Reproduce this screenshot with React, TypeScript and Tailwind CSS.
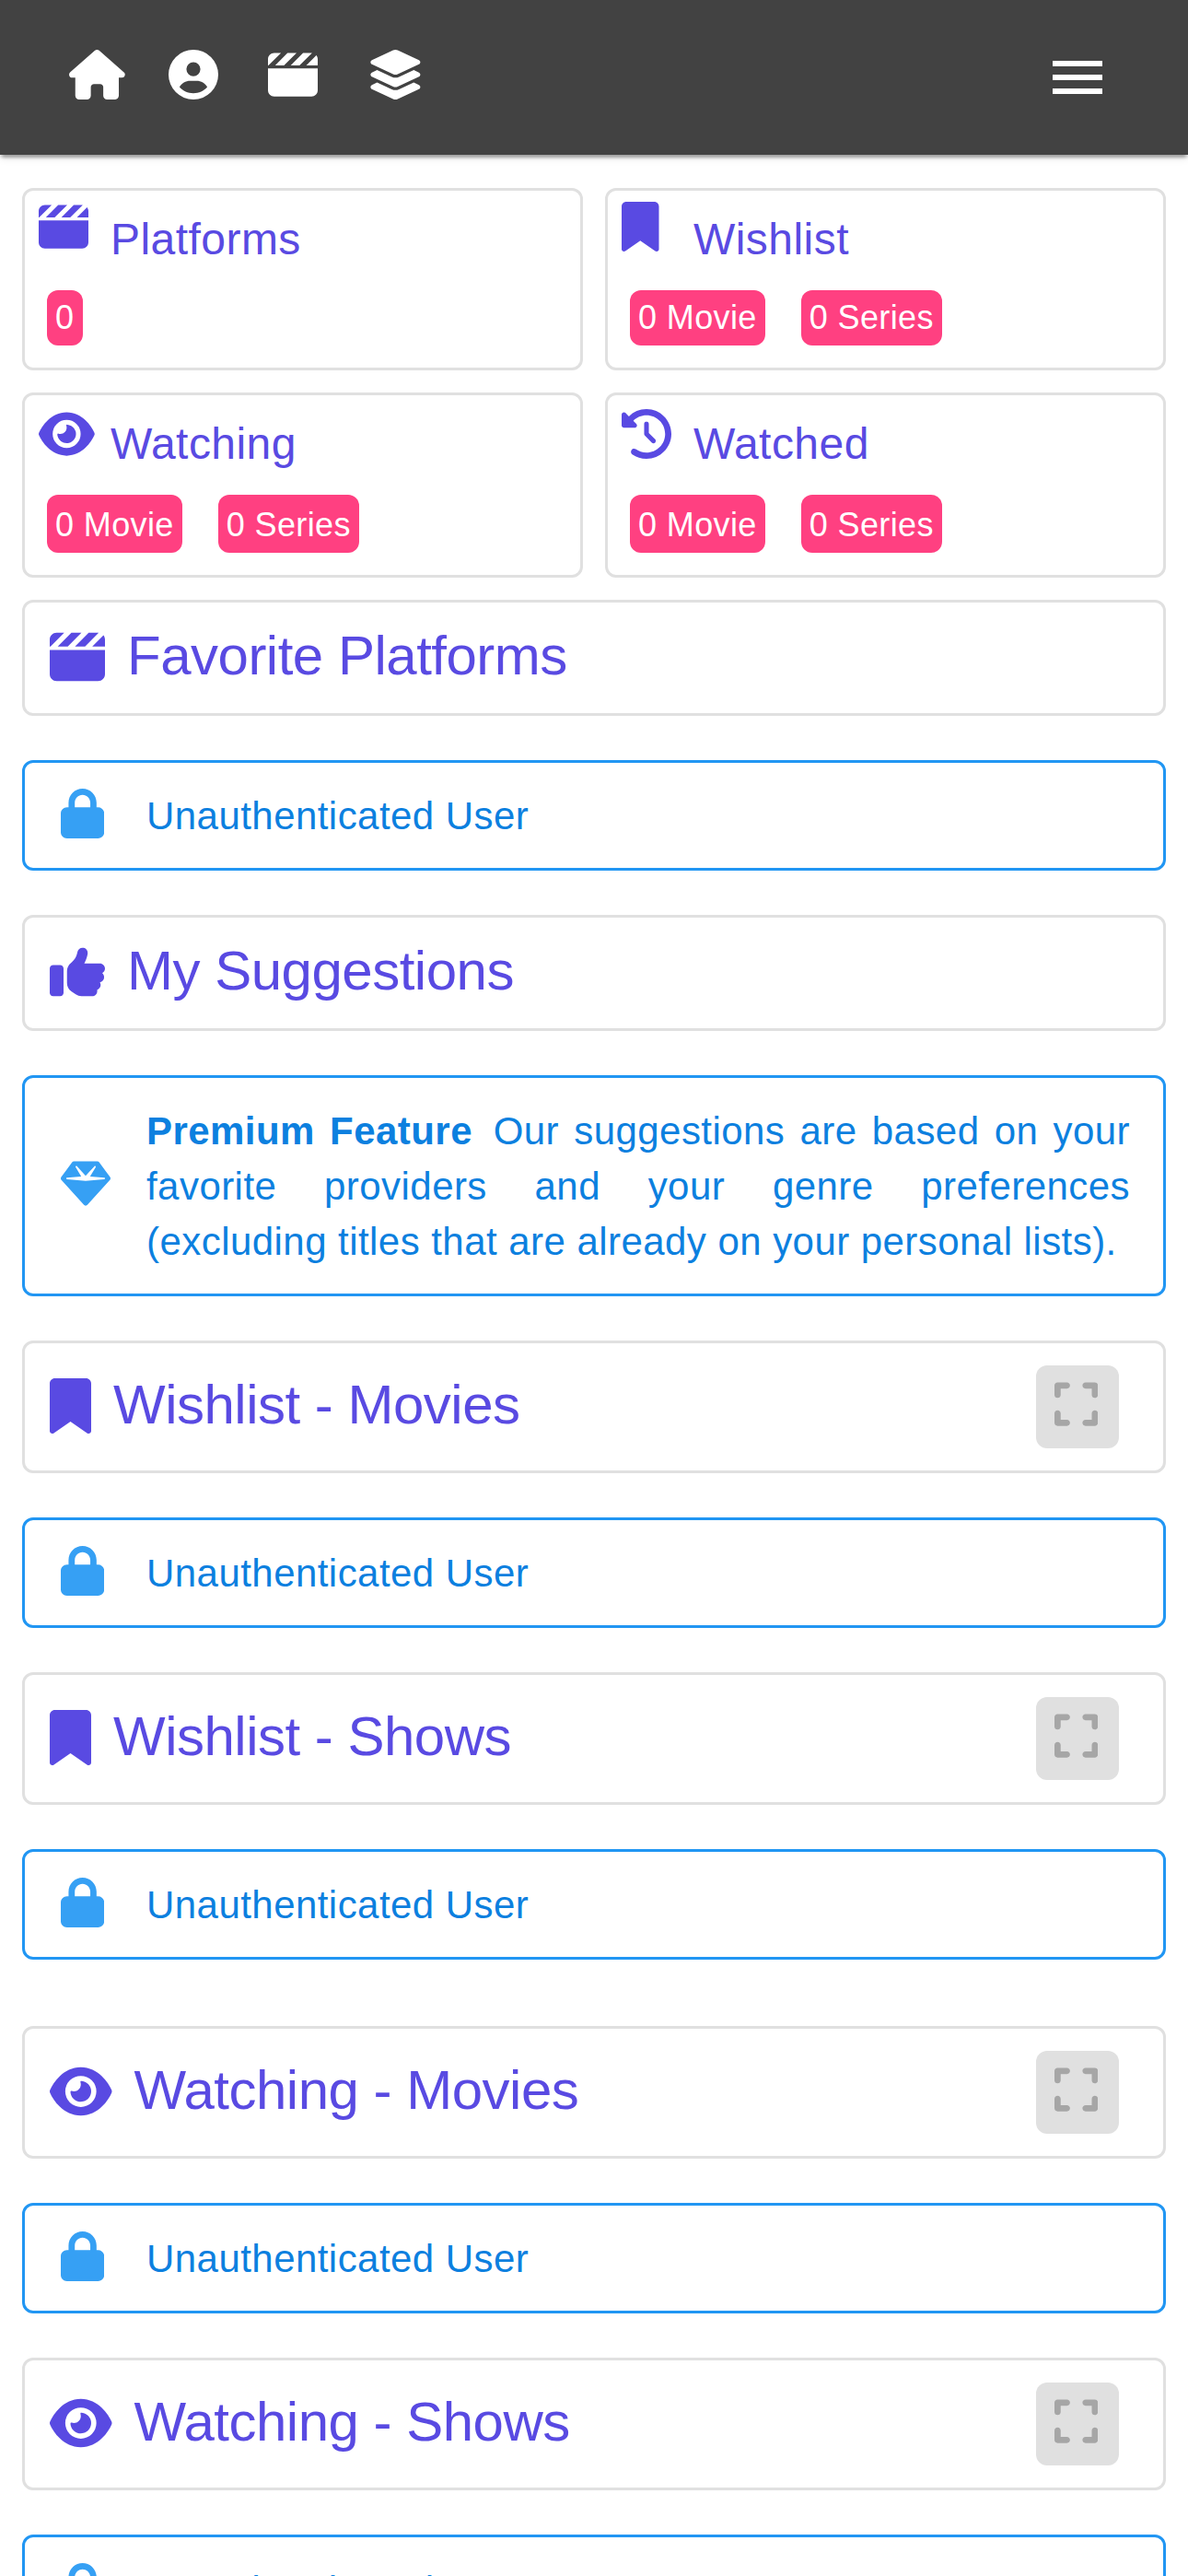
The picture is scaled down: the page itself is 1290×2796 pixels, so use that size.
import type { ReactNode } from "react";
import type { IconType } from "react-icons";
import {
  FaBookmark,
  FaCircleUser,
  FaClapperboard,
  FaClockRotateLeft,
  FaExpand,
  FaEye,
  FaGem,
  FaHouse,
  FaLayerGroup,
  FaLock,
  FaThumbsUp,
} from "react-icons/fa6";
import { MdMenu } from "react-icons/md";

function TopBar() {
  return (
    <header className="flex h-[168px] items-start bg-[#424242] pt-[54.4px] pr-[84px] pl-[75px] text-white shadow-[0_6px_3px_-3px_rgba(0,0,0,0.2),0_3px_3px_0_rgba(0,0,0,0.14),0_3px_9px_0_rgba(0,0,0,0.12)]">
      <FaHouse className="h-[54px] w-[60.75px]" />
      <FaCircleUser className="ml-[47.25px] h-[54px] w-[54px]" />
      <FaClapperboard className="ml-[54px] h-[54px] w-[54px]" />
      <FaLayerGroup className="ml-[54px] h-[54px] w-[60.75px]" />
      <MdMenu className="-mt-[6.4px] ml-auto h-[72px] w-[72px]" />
    </header>
  );
}

function Chip({ children, tall }: { children: ReactNode; tall?: boolean }) {
  return (
    <span
      className={
        "min-w-[39px] rounded-[12px] bg-[#ff4081] px-[9px] text-[36px] tracking-[0.01071em] whitespace-nowrap text-white " +
        (tall ? "h-[63px] leading-[65px]" : "h-[60px] leading-[59px]")
      }
    >
      {children}
    </span>
  );
}

type SummaryProps = {
  icon: IconType;
  iconSize: string;
  title: string;
  chips: string[];
  tall?: boolean;
};

function SummaryCard({ icon: Icon, iconSize, title, chips, tall }: SummaryProps) {
  return (
    <section
      className={
        "rounded-[12px] border-[3px] border-[#e0e0e0] " + (tall ? "h-[201px]" : "h-[198px]")
      }
    >
      <div className="flex items-start pl-[15px] text-[#594ae2]">
        <div className={"w-[78px] " + (tall ? "pt-[15.4px]" : "pt-[12.4px]")}>
          <Icon className={iconSize} />
        </div>
        <h2 className="mt-[16.5px] text-[48px] leading-[72px] tracking-[0.00938em]">{title}</h2>
      </div>
      <div className="mt-[19.5px] flex gap-[39px] pl-[24px]">
        {chips.map((c) => (
          <Chip key={c} tall={tall}>
            {c}
          </Chip>
        ))}
      </div>
    </section>
  );
}

type HeadingProps = { icon: IconType; iconSize: string; title: string; expandable?: boolean };

function SectionHeading({ icon: Icon, iconSize, title, expandable }: HeadingProps) {
  return (
    <section
      className={
        "flex items-center rounded-[12px] border-[3px] border-[#e0e0e0] pr-[48px] pl-[27px] text-[#594ae2] " +
        (expandable ? "h-[144px]" : "h-[126px]")
      }
    >
      <Icon className={"mb-[3px] " + iconSize} />
      <h2 className="mb-[5px] ml-[24px] text-[60px] leading-[96px] tracking-[-0.00833em]">
        {title}
      </h2>
      {expandable && (
        <button className="ml-auto flex h-[90px] w-[90px] items-start rounded-[12px] bg-[#e0e0e0] pt-[15.4px] pl-[20.2px] text-[#a6a6a6]">
          <FaExpand className="h-[54px] w-[47.25px]" />
        </button>
      )}
    </section>
  );
}

type AlertProps = { icon: IconType; iconSize: string; children: ReactNode };

function Alert({ icon: Icon, iconSize, children }: AlertProps) {
  return (
    <div className="mt-[48px] mb-[48px] flex items-center rounded-[12px] border-[3px] border-[#2196f3] pt-[27.5px] pr-[36px] pb-[26.5px] pl-[39px] text-[#0c80df]">
      <div className="mb-[6px] w-[93px] shrink-0 text-[#2196f3] opacity-90">
        <Icon className={iconSize} />
      </div>
      <p className="text-justify text-[42px] leading-[60px] tracking-[0.01071em]">{children}</p>
    </div>
  );
}

function LockedAlert() {
  return (
    <Alert icon={FaLock} iconSize="h-[54px] w-[47.25px]">
      Unauthenticated User
    </Alert>
  );
}

const counts = ["0 Movie", "0 Series"];

export default function App() {
  return (
    <div className="h-[2796px] w-[1290px] overflow-hidden bg-white font-['Liberation_Sans',Arial,sans-serif]">
      <TopBar />
      <main className="px-[24px] pt-[36px]">
        <div className="mb-[24px] grid grid-cols-2 gap-[24px]">
          <SummaryCard
            icon={FaClapperboard}
            iconSize="h-[54px] w-[54px]"
            title="Platforms"
            chips={["0"]}
          />
          <SummaryCard
            icon={FaBookmark}
            iconSize="h-[54px] w-[40.5px]"
            title="Wishlist"
            chips={counts}
          />
          <SummaryCard
            icon={FaEye}
            iconSize="h-[54px] w-[60.75px]"
            title="Watching"
            chips={counts}
            tall
          />
          <SummaryCard
            icon={FaClockRotateLeft}
            iconSize="h-[54px] w-[54px]"
            title="Watched"
            chips={counts}
            tall
          />
        </div>

        <SectionHeading
          icon={FaClapperboard}
          iconSize="h-[60px] w-[60px]"
          title="Favorite Platforms"
        />
        <LockedAlert />

        <SectionHeading icon={FaThumbsUp} iconSize="h-[60px] w-[60px]" title="My Suggestions" />
        <Alert icon={FaGem} iconSize="h-[54px] w-[54px]">
          <b className="mr-[6.5px]">Premium Feature</b> Our suggestions are based on your favorite
          providers and your genre preferences (excluding titles that are already on your personal
          lists).
        </Alert>

        <SectionHeading
          icon={FaBookmark}
          iconSize="h-[60px] w-[45px]"
          title="Wishlist - Movies"
          expandable
        />
        <LockedAlert />
        <SectionHeading
          icon={FaBookmark}
          iconSize="h-[60px] w-[45px]"
          title="Wishlist - Shows"
          expandable
        />
        <LockedAlert />

        <div className="pt-[24px]">
          <SectionHeading
            icon={FaEye}
            iconSize="h-[60px] w-[67.5px]"
            title="Watching - Movies"
            expandable
          />
          <LockedAlert />
          <SectionHeading
            icon={FaEye}
            iconSize="h-[60px] w-[67.5px]"
            title="Watching - Shows"
            expandable
          />
          <LockedAlert />
        </div>
      </main>
    </div>
  );
}
